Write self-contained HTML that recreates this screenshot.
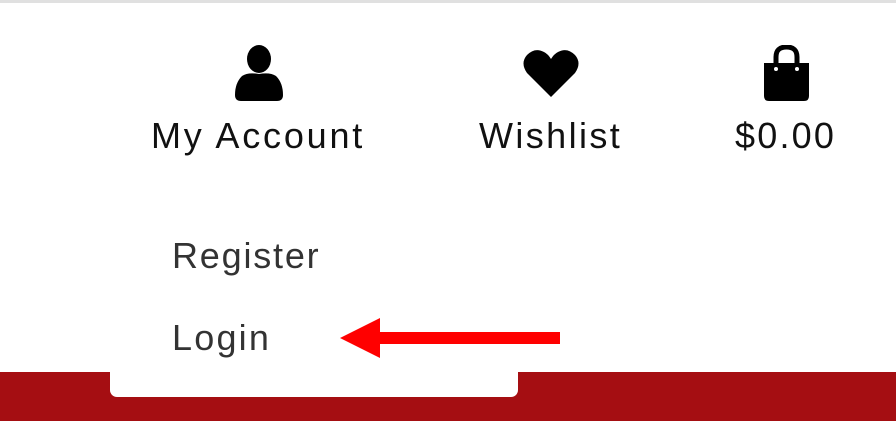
<!DOCTYPE html>
<html><head><style>
body{margin:0;width:896px;height:421px;position:relative;overflow:hidden;background:#fff;font-family:"Liberation Sans",sans-serif}
.t{position:absolute;font-size:36px;line-height:1;white-space:nowrap;letter-spacing:2.2px}
</style></head><body>
<div style="position:absolute;left:0;top:0;width:896px;height:3px;background:#e0e0e0"></div>
<div style="position:absolute;left:0;top:372px;width:896px;height:49px;background:#a50e12"></div>
<div style="position:absolute;left:110px;top:340px;width:408px;height:57px;background:#fff;border-radius:0 0 7px 7px"></div>
<svg style="position:absolute;left:234px;top:45px" width="50" height="56" viewBox="0 0 50 56"><ellipse cx="25" cy="14" rx="12" ry="14"/><path d="M8 31 Q14 27 25 29 Q36 27 42 31 Q49 38 49 50 Q49 56 43 56 L7 56 Q1 56 1 50 Q1 38 8 31Z"/></svg>
<svg style="position:absolute;left:523px;top:49px" width="56" height="49" viewBox="0 0 56 49"><path d="M28 48 L4 24 Q-3 14 4 6 Q12 -2 21 3 Q25 5 28 10 Q31 5 35 3 Q44 -2 52 6 Q59 14 52 24Z"/></svg>
<svg style="position:absolute;left:762px;top:45px" width="49" height="56" viewBox="0 0 49 56"><path d="M14 18 V12 Q14 2 24.5 2 Q35 2 35 12 V18" fill="none" stroke="#000" stroke-width="5"/><path d="M2 18 H47 V51 Q47 56 42 56 H7 Q2 56 2 51Z"/><circle cx="14" cy="24" r="2" fill="#fff"/><circle cx="35" cy="24" r="2" fill="#fff"/></svg>
<div class="t" style="left:151px;top:118px;color:#111;letter-spacing:2.8px">My Account</div>
<div class="t" style="left:479px;top:118px;color:#111;letter-spacing:2.4px">Wishlist</div>
<div class="t" style="left:735px;top:118px;color:#111">$0.00</div>
<div class="t" style="left:172px;top:238px;color:#333;letter-spacing:1.8px">Register</div>
<div class="t" style="left:172px;top:320px;color:#333">Login</div>
<svg style="position:absolute;left:338px;top:316px" width="224" height="44"><path d="M2 22 L42 2 V16 H222 V28 H42 V42Z" fill="#f00"/></svg>
</body></html>
